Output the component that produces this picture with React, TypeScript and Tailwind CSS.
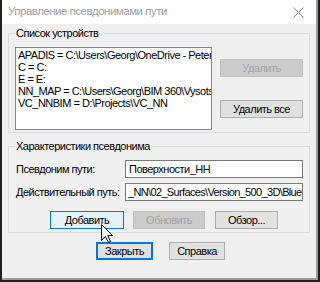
import React from 'react'

const font = { fontFamily: '"Liberation Sans", Arial, sans-serif' }

function Btn({
  label,
  kind = 'normal',
  className = '',
}: {
  label: string
  kind?: 'normal' | 'disabled' | 'hover' | 'default'
  className?: string
}) {
  const styles = {
    normal: 'border border-[#adadad] bg-[#e1e1e1] text-black',
    disabled: 'border border-[#bfbfbf] bg-[#cccccc] text-[#a3a3a3]',
    hover: 'border border-[#0078d7] bg-[#e5f1fb] text-black',
    default: 'border-2 border-[#0078d7] bg-[#e1e1e1] text-black',
  }
  return (
    <div className={`flex h-[18px] items-center justify-center leading-none ${styles[kind]} ${className}`}>
      {label}
    </div>
  )
}

const items = [
  'APADIS = C:\\Users\\Georg\\OneDrive - Peter Fritz\\Projects',
  'C = C:',
  'E = E:',
  'NN_MAP = C:\\Users\\Georg\\BIM 360\\Vysotsky\\Maps',
  'VC_NNBIM = D:\\Projects\\VC_NN',
]

const realPath = '_NN\\02_Surfaces\\Version_500_3D\\Blue'

export default function App() {
  return (
    <div
      className="relative flex h-[282px] w-[320px] overflow-hidden bg-[#1f1f1f] text-[11px] tracking-[-0.5px]"
      style={font}
    >
      {/* window */}
      <div className="ml-[2px] flex h-[280px] w-[316px] flex-col border-r-2 border-b-2 border-[#9c9c9c] bg-[#f0f0f0]">
        {/* title bar */}
        <div className="flex h-[24px] items-center justify-between bg-white pl-[6px] pr-[12px]">
          <span className="text-[11.5px] text-[#a0a0a0]">Управление псевдонимами пути</span>
          <svg width="11" height="11" viewBox="0 0 11 11" className="text-[#8a8a8a]">
            <path d="M0.5 0.5 L10.5 10.5 M10.5 0.5 L0.5 10.5" stroke="currentColor" strokeWidth="1" />
          </svg>
        </div>

        <div className="flex flex-col px-[6px] pt-[2px]">
          {/* group 1 */}
          <fieldset className="h-[107px] border border-[#dcdcdc] px-[6px]">
            <legend className="h-[14px] px-[1px] leading-[14px] text-black">Список устройств</legend>
            <div className="mt-[7px] flex gap-[8px]">
              <div className="h-[83px] w-[197px] overflow-hidden border border-[#828790] bg-white px-[2px] pt-[1px]">
                {items.map((t) => (
                  <div key={t} className="whitespace-nowrap leading-[12px] text-black">
                    {t}
                  </div>
                ))}
              </div>
              <div className="flex flex-col pt-[12px]">
                <Btn label="Удалить" kind="disabled" className="w-[83px]" />
                <Btn label="Удалить все" className="mt-[23px] w-[83px]" />
              </div>
            </div>
          </fieldset>

          {/* group 2 */}
          <fieldset className="mt-[6px] h-[94px] border border-[#dcdcdc] px-[7px]">
            <legend className="ml-[-1px] h-[14px] px-[1px] leading-[14px] text-black">Характеристики псевдонима</legend>
            <div className="mt-[7px] flex items-center justify-between">
              <span className="whitespace-nowrap text-black">Псевдоним пути:</span>
              <div className="mr-[-1px] flex h-[18px] w-[178px] items-center border border-[#7a7a7a] bg-white px-[3px] text-black">
                Поверхности_НН
              </div>
            </div>
            <div className="mt-[5px] flex items-center justify-between">
              <span className="whitespace-nowrap text-black">Действительный путь:</span>
              <div className="mr-[-1px] flex h-[18px] w-[178px] items-center overflow-hidden whitespace-nowrap border border-[#7a7a7a] bg-white px-[2px] tracking-[-0.65px] text-black">
                {realPath}
              </div>
            </div>
            <div className="mt-[10px] flex pl-[34px]">
              <Btn label="Добавить" kind="hover" className="w-[74px]" />
              <Btn label="Обновить" kind="disabled" className="ml-[9px] w-[72px]" />
              <Btn label="Обзор..." className="ml-[10px] w-[63px]" />
            </div>
          </fieldset>

          {/* bottom buttons */}
          <div className="mt-[9px] flex pl-[88px]">
            <Btn label="Закрыть" kind="default" className="w-[57px]" />
            <Btn label="Справка" className="ml-[16px] w-[56px]" />
          </div>
        </div>
      </div>

      {/* mouse cursor */}
      <svg className="absolute left-[101px] top-[224px]" width="13" height="20" viewBox="0 0 13 20">
        <path
          d="M0.5 0.5 L0.5 16.5 L4.5 12.5 L7.5 18.5 L9.5 17.5 L6.8 11.5 L11.5 11.5 Z"
          fill="white"
          stroke="black"
          strokeWidth="1"
          strokeLinejoin="miter"
        />
      </svg>
    </div>
  )
}
